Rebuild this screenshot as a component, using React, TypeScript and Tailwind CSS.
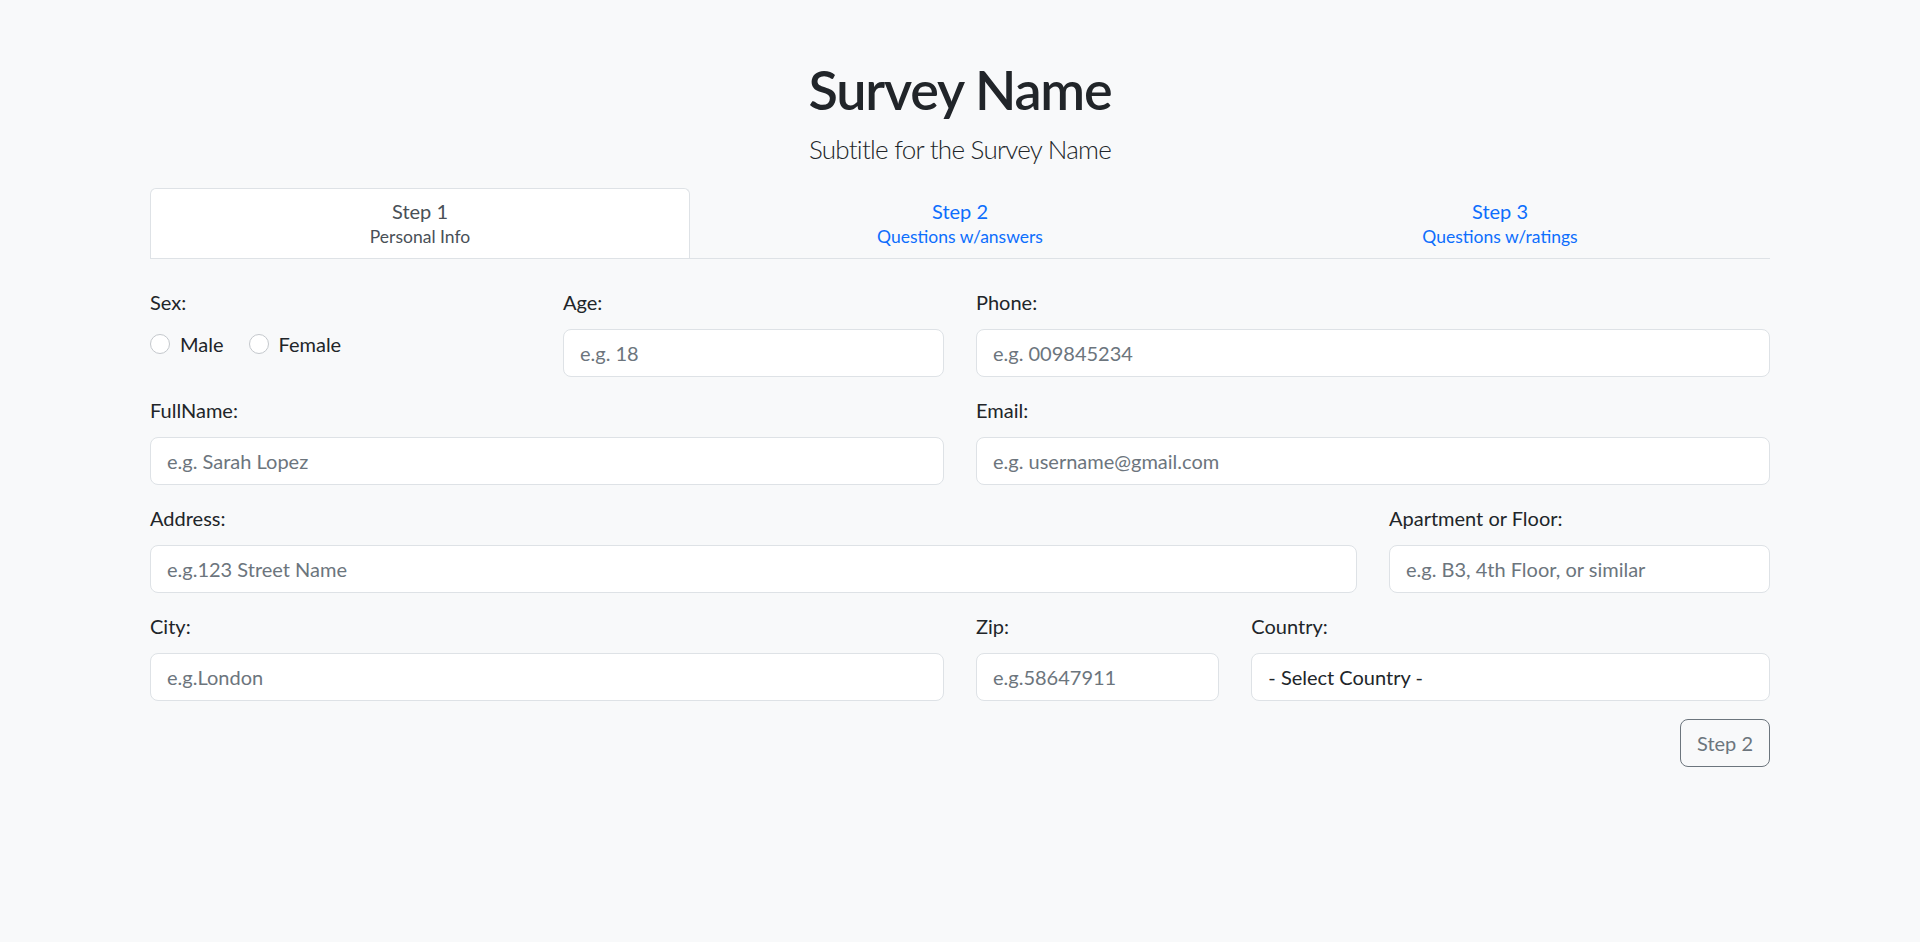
import React from "react"

const steps = [
  { title: "Step 1", sub: "Personal Info", active: true },
  { title: "Step 2", sub: "Questions w/answers", active: false },
  { title: "Step 3", sub: "Questions w/ratings", active: false },
]

const inputCls =
  "h-12 w-full rounded-lg border border-[#dee2e6] bg-white px-4 text-[20px] text-[#212529] placeholder:text-[#6c757d] outline-none"

function Field({ label, placeholder, span }: { label: string; placeholder: string; span: string }) {
  return (
    <div className={span}>
      <label className="mb-3 block text-[20px] leading-[30px]">{label}</label>
      <input className={inputCls} placeholder={placeholder} />
    </div>
  )
}

export default function App() {
  return (
    <div className="min-h-screen bg-[#f8f9fa] font-['Lato',sans-serif] text-[#212529]">
      <div className="mx-auto w-[1620px] pt-[57px]">
        <header className="text-center">
          <h1 className="text-[54px] font-semibold leading-[65px] tracking-[-1.2px]">Survey Name</h1>
          <p className="mt-[11px] text-[26px] font-light leading-[32px] tracking-[-0.75px]">Subtitle for the Survey Name</p>
        </header>

        <nav className="mt-[23px] grid grid-cols-3 border-b border-[#dee2e6]">
          {steps.map((s) => (
            <div
              key={s.title}
              className={
                s.active
                  ? "flex flex-col items-center rounded-t-md border-x border-t border-[#dee2e6] bg-white pt-[10px] pb-[10px] text-[#495057]"
                  : "flex flex-col items-center border-x border-t border-transparent pt-[10px] pb-[10px] text-[#0d6efd]"
              }
            >
              <span className="text-[20px] leading-[24px]">{s.title}</span>
              <span className="mt-[3px] text-[17.5px] leading-[22px]">{s.sub}</span>
            </div>
          ))}
        </nav>

        <form className="mt-[28px] grid grid-cols-12 gap-x-8 gap-y-[18px]">
          <div className="col-span-3">
            <label className="mb-3 block text-[20px] leading-[30px]">Sex:</label>
            <div className="flex items-center text-[20px] leading-[30px]">
              <label className="mr-[25px] flex items-center gap-[10px]">
                <span className="h-5 w-5 rounded-full border border-[#c4c8cc] bg-white" />
                Male
              </label>
              <label className="flex items-center gap-[10px]">
                <span className="h-5 w-5 rounded-full border border-[#c4c8cc] bg-white" />
                Female
              </label>
            </div>
          </div>
          <Field span="col-span-3" label="Age:" placeholder="e.g. 18" />
          <Field span="col-span-6" label="Phone:" placeholder="e.g. 009845234" />

          <Field span="col-span-6" label="FullName:" placeholder="e.g. Sarah Lopez" />
          <Field span="col-span-6" label="Email:" placeholder="e.g. username@gmail.com" />

          <Field span="col-span-9" label="Address:" placeholder="e.g.123 Street Name" />
          <Field span="col-span-3" label="Apartment or Floor:" placeholder="e.g. B3, 4th Floor, or similar" />

          <Field span="col-span-6" label="City:" placeholder="e.g.London" />
          <Field span="col-span-2" label="Zip:" placeholder="e.g.58647911" />
          <div className="col-span-4">
            <label className="mb-3 block text-[20px] leading-[30px]">Country:</label>
            <select className={inputCls + " appearance-none"} defaultValue="">
              <option value="">- Select Country -</option>
            </select>
          </div>
        </form>

        <div className="mt-[18px] flex justify-end">
          <button className="h-12 rounded-lg border border-[#6c757d] px-4 text-[20px] text-[#6c757d]">Step 2</button>
        </div>
      </div>
    </div>
  )
}
